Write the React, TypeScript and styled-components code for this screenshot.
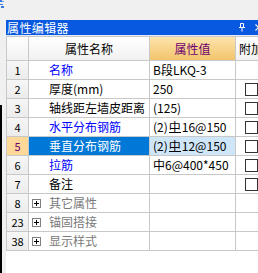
import React from 'react';
import styled, { createGlobalStyle } from 'styled-components';

const Global = createGlobalStyle`
  html, body { margin: 0; padding: 0; background: #f0f0f0; }
  body { font-family: "Noto Sans CJK SC", "Liberation Sans", sans-serif; font-size: 12px; }
  * { box-sizing: border-box; }
`;

const Page = styled.div`
  width: 258px;
  height: 273px;
  display: flex;
  overflow: hidden;
  background: #f0f0f0;
`;

const Gutter = styled.div`
  width: 6px;
  flex: none;
  display: flex;
  flex-direction: column;
`;

const GutterSpacer = styled.div`
  height: 95px;
  flex: none;
`;

const BlackStrip = styled.div`
  width: 2px;
  flex: 1;
  background: #000;
`;

const Panel = styled.div`
  flex: 1;
  min-width: 0;
  display: flex;
  flex-direction: column;
  overflow: hidden;
`;

const TopSpace = styled.div`
  height: 20px;
  flex: none;
`;

const TitleBar = styled.div`
  height: 15px;
  flex: none;
  background: #0858e0;
  color: #fff;
  display: flex;
  align-items: center;
  padding-left: 1px;
  font-size: 12px;
  line-height: 15px;
  white-space: nowrap;
`;

const TitleText = styled.span`
  flex: 1;
  letter-spacing: 0.4px;
`;

const TitleIcons = styled.div`
  display: flex;
  align-items: center;
  gap: 9px;
  margin-right: -4px;
`;

const Separator = styled.div`
  height: 1px;
  flex: none;
  background: #e4ebf5;
`;

const Grid = styled.div`
  flex: 1;
  background: #fff;
  border-top: 1px solid #c8c8c8;
`;

const Row = styled.div<{ $header?: boolean }>`
  display: grid;
  grid-template-columns: 22px 121px 86px 40px;
  height: ${(p) => (p.$header ? 24 : 19)}px;
  border-left: 1px solid #c8c8c8;
  white-space: nowrap;
`;

const Cell = styled.div`
  border-right: 1px solid #c8c8c8;
  border-bottom: 1px solid #c8c8c8;
  display: flex;
  align-items: center;
  overflow: hidden;
  line-height: 16px;
`;

const HeadCell = styled(Cell)<{ $accent?: boolean; $left?: boolean }>`
  justify-content: ${(p) => (p.$left ? 'flex-start' : 'center')};
  padding-left: ${(p) => (p.$left ? 3 : 0)}px;
  background: ${(p) =>
    p.$accent
      ? 'linear-gradient(#fde4ad, #f2c46c)'
      : 'linear-gradient(#ffffff, #f1f1f1)'};
  color: ${(p) => (p.$accent ? '#6e0070' : '#000')};
  font-size: 12px;
`;

const NumCell = styled(Cell)<{ $sel?: boolean }>`
  justify-content: center;
  background: ${(p) => (p.$sel ? '#fed899' : 'linear-gradient(#f6f6f6, #ececec)')};
  color: ${(p) => (p.$sel ? '#6e0070' : '#000')};
  font-size: 11px;
`;

const tones: Record<string, string> = {
  blue: '#0000ff',
  black: '#000000',
  group: '#7a7a7a',
};

const NameCell = styled(Cell)<{ $tone: string; $sel?: boolean; $group?: boolean }>`
  padding-left: ${(p) => (p.$group ? 3 : 20)}px;
  gap: 8px;
  background: ${(p) => (p.$sel ? '#0078d7' : '#fff')};
  color: ${(p) => (p.$sel ? '#fff' : tones[p.$tone])};
`;

const ValueCell = styled(Cell)<{ $sel?: boolean }>`
  padding-left: 3px;
  background: ${(p) => (p.$sel ? '#cfe6f8' : '#fff')};
  color: #000;
`;

const ExtraCell = styled(Cell)`
  padding-left: 9px;
`;

const CheckBox = styled.span`
  width: 13px;
  height: 13px;
  flex: none;
  border: 1px solid #333;
  background: #fff;
`;

const Rebar = styled.span`
  display: inline-block;
  line-height: 11px;
  border-bottom: 1px solid #000;
  margin: 0 1px;
`;

const ExpandBox = styled.svg`
  flex: none;
  display: block;
`;

const Plus = () => (
  <ExpandBox width="9" height="9" viewBox="0 0 9 9">
    <rect x="0.5" y="0.5" width="8" height="8" fill="#fff" stroke="#808080" />
    <path d="M2 4.5h5M4.5 2v5" stroke="#000" strokeWidth="1" />
  </ExpandBox>
);

type RowData = {
  n: string;
  name: string;
  tone: 'blue' | 'black' | 'group';
  value?: React.ReactNode;
  check?: boolean;
  sel?: boolean;
  group?: boolean;
};

const rows: RowData[] = [
  { n: '1', name: '名称', tone: 'blue', value: 'B段LKQ-3' },
  { n: '2', name: '厚度(mm)', tone: 'black', value: '250', check: true },
  { n: '3', name: '轴线距左墙皮距离', tone: 'black', value: '(125)', check: true },
  {
    n: '4',
    name: '水平分布钢筋',
    tone: 'blue',
    value: (
      <>
        (2)<Rebar>中</Rebar>16@150
      </>
    ),
    check: true,
  },
  {
    n: '5',
    name: '垂直分布钢筋',
    tone: 'blue',
    value: (
      <>
        (2)<Rebar>中</Rebar>12@150
      </>
    ),
    check: true,
    sel: true,
  },
  { n: '6', name: '拉筋', tone: 'blue', value: '中6@400*450', check: true },
  { n: '7', name: '备注', tone: 'black', value: '', check: true },
  { n: '8', name: '其它属性', tone: 'group', group: true },
  { n: '23', name: '锚固搭接', tone: 'group', group: true },
  { n: '38', name: '显示样式', tone: 'group', group: true },
];

export default function App() {
  return (
    <>
      <Global />
      <Page>
        <Gutter>
          <svg width="6" height="10" viewBox="0 0 6 10" style={{ display: 'block' }}>
            <rect x="0" y="0" width="2" height="2" fill="#3a7be0" />
            <rect x="2" y="1" width="2" height="1" fill="#6fa0ea" />
            <rect x="0" y="4" width="3" height="1" fill="#3a7be0" />
            <rect x="1" y="6" width="3" height="2" fill="#3a7be0" />
          </svg>
          <GutterSpacer />
          <BlackStrip />
        </Gutter>
        <Panel>
          <TopSpace />
          <TitleBar>
            <TitleText>属性编辑器</TitleText>
            <TitleIcons>
              <svg width="8" height="9" viewBox="0 0 8 9">
                <path d="M1 4.5h6M2.5 0.5h3v4M2.5 0.5v4M4 4.5v4" stroke="#fff" fill="none" strokeWidth="1" />
              </svg>
              <svg width="7" height="7" viewBox="0 0 7 7">
                <path d="M0.5 0.5l6 6M6.5 0.5l-6 6" stroke="#fff" strokeWidth="1.2" />
              </svg>
            </TitleIcons>
          </TitleBar>
          <Separator />
          <Grid>
            <Row $header>
              <HeadCell />
              <HeadCell>属性名称</HeadCell>
              <HeadCell $accent>属性值</HeadCell>
              <HeadCell $left>附加</HeadCell>
            </Row>
            {rows.map((r) => (
              <Row key={r.n}>
                <NumCell $sel={r.sel}>{r.n}</NumCell>
                <NameCell $tone={r.tone} $sel={r.sel} $group={r.group}>
                  {r.group && <Plus />}
                  {r.name}
                </NameCell>
                <ValueCell $sel={r.sel}>{r.value}</ValueCell>
                <ExtraCell>{r.check && <CheckBox />}</ExtraCell>
              </Row>
            ))}
          </Grid>
        </Panel>
      </Page>
    </>
  );
}
